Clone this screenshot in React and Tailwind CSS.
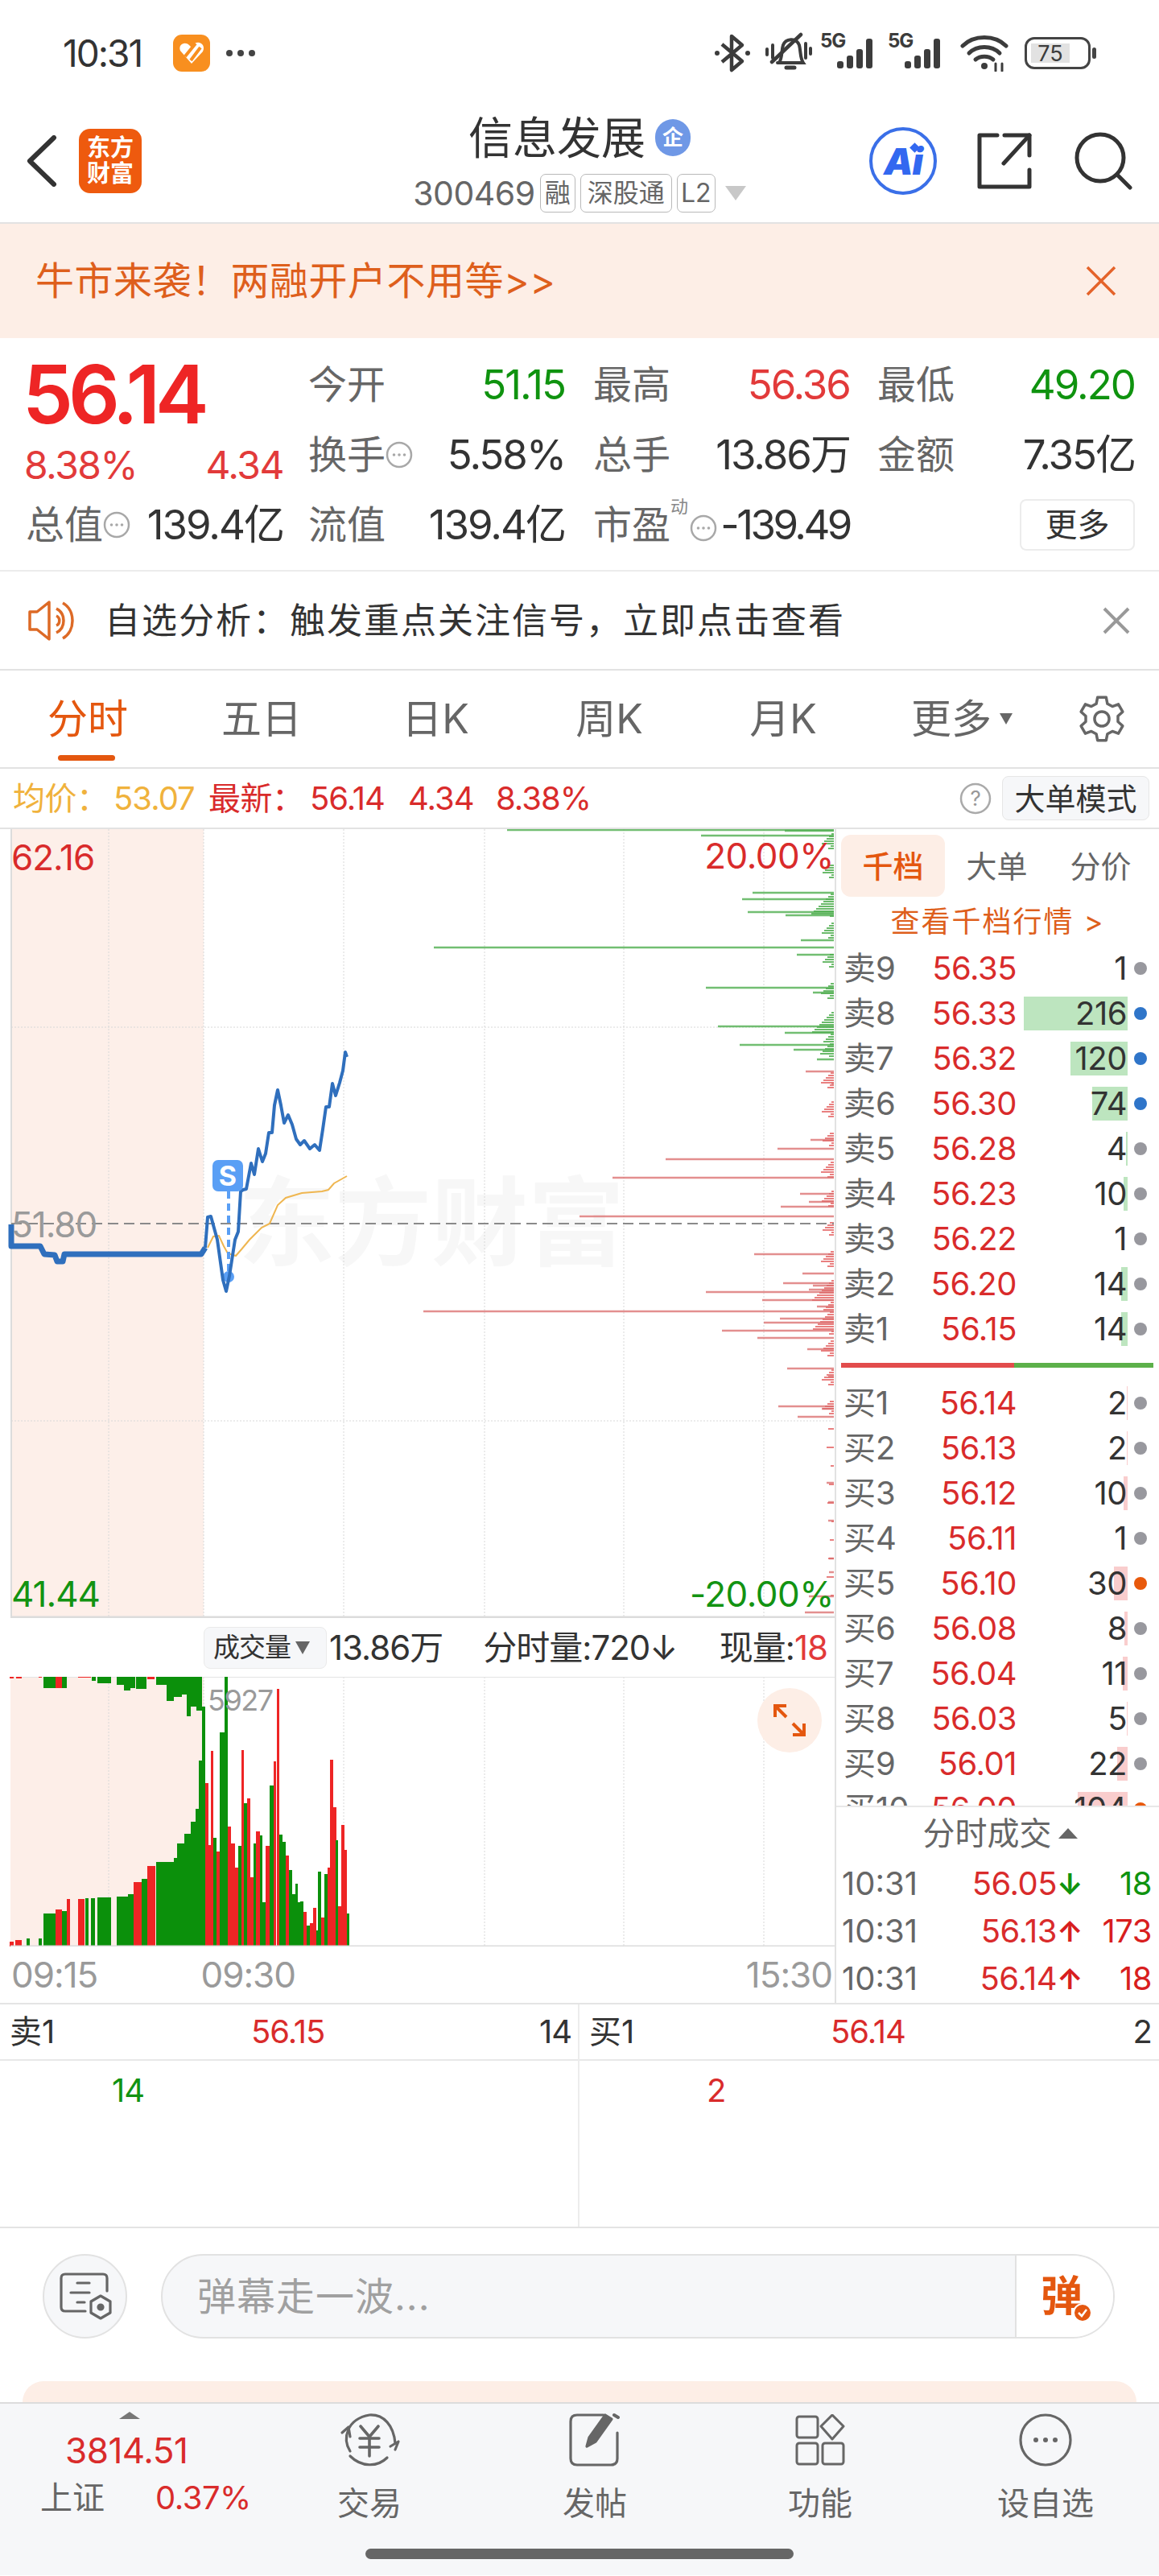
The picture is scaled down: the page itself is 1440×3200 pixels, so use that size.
import React from 'react';

const sellRows = [
  ['卖9', '56.35', '1', 0, 'gray'],
  ['卖8', '56.33', '216', 129, 'blue'],
  ['卖7', '56.32', '120', 71, 'blue'],
  ['卖6', '56.30', '74', 44, 'blue'],
  ['卖5', '56.28', '4', 2, 'gray'],
  ['卖4', '56.23', '10', 5, 'gray'],
  ['卖3', '56.22', '1', 0, 'gray'],
  ['卖2', '56.20', '14', 8, 'gray'],
  ['卖1', '56.15', '14', 8, 'gray'],
];

const buyRows = [
  ['买1', '56.14', '2', 1, 'gray'],
  ['买2', '56.13', '2', 1, 'gray'],
  ['买3', '56.12', '10', 5, 'gray'],
  ['买4', '56.11', '1', 0, 'gray'],
  ['买5', '56.10', '30', 17, 'orange'],
  ['买6', '56.08', '8', 4, 'gray'],
  ['买7', '56.04', '11', 6, 'gray'],
  ['买8', '56.03', '5', 1, 'gray'],
  ['买9', '56.01', '22', 13, 'gray'],
  ['买10', '56.00', '104', 62, 'orange'],
];

const dotColors = { gray: 'bg-[#98989e]', blue: 'bg-[#2f75c9]', orange: 'bg-[#e8590c]' };

const flatPoints = '14,1521 14,1548 50,1548 55,1558 68,1559 71,1567 78,1567 80,1558 250,1558 255,1550';
const pricePoints = '255,1550 258,1512 262,1511 270,1540 277,1590 281,1604 285,1585 292,1540 296,1530 299,1480 302,1478 306,1477 312,1445 316,1459 321,1427 326,1443 330,1433 334,1407 338,1407 341,1373 345,1354 349,1373 353,1395 358,1385 363,1397 368,1415 373,1422 378,1417 385,1427 391,1422 397,1429 401,1403 405,1375 409,1375 413,1346 417,1361 422,1345 426,1330 429,1307 431,1313';
const avgPoints = '258,1550 265,1536 272,1535 278,1548 283,1557 293,1560 300,1552 310,1540 325,1525 335,1520 345,1497 355,1488 375,1482 400,1480 408,1478 415,1470 431,1461';

// [起点x, y]，大单横线
const greenDepth = [[630, 1031], [871, 1038], [975, 1032], [935, 1109], [922, 1117], [929, 1133], [976, 1137], [995, 1168], [539, 1177], [990, 1186], [877, 1227], [1010, 1233], [892, 1275], [975, 1283], [919, 1298], [986, 1304], [1015, 1316]];
const redDepth = [[1001, 1331], [1033, 1346], [1007, 1416], [966, 1427], [827, 1440], [761, 1463], [994, 1483], [1005, 1493], [970, 1499], [720, 1511], [937, 1558], [997, 1582], [973, 1594], [1010, 1597], [1005, 1602], [877, 1605], [947, 1615], [1015, 1623], [526, 1629], [969, 1638], [949, 1643], [897, 1653], [941, 1662], [1003, 1676], [978, 1700], [1029, 1710], [967, 1747], [1021, 1750], [991, 1760], [1027, 1842], [1029, 1866], [1029, 1889], [1030, 1936], [1030, 1953], [1005, 1983], [1000, 2003]];

const depthTicks = [];
for (let y = 1030; y < 1770; y += 3) {
  const n = (y * 7919) % 37;
  const dense = (y > 1270 && y < 1310) || (y > 1600 && y < 1660) || (y > 1125 && y < 1140);
  if (n < 20 || dense) depthTicks.push([1036 - (n % (dense ? 26 : 14)) - 3, y]);
}
for (let y = 1775; y < 2005; y += 23) {
  depthTicks.push([1036 - (y % 7) - 3, y]);
}

// 成交量柱：x1, x2, 顶部y（放大图坐标，下面换算）
const volBars = [
  [18, 26, 1295, 'r'], [28, 40, 1290, 'r'], [50, 56, 1285, 'g'], [72, 78, 1285, 'g'], [82, 104, 1190, 'g'], [104, 116, 1175, 'r'], [116, 125, 1183, 'g'], [125, 131, 1138, 'r'], [146, 158, 1137, 'r'], [160, 166, 1135, 'g'], [170, 178, 1135, 'g'], [183, 208, 1132, 'g'], [218, 240, 1128, 'g'], [240, 250, 1120, 'g'], [250, 265, 1075, 'r'], [265, 276, 1063, 'g'], [276, 291, 1015, 'r'], [292, 325, 1000, 'g'], [325, 331, 985, 'g'], [331, 345, 930, 'g'], [345, 357, 895, 'g'], [357, 367, 850, 'g'], [367, 373, 800, 'g'], [373, 379, 620, 'g'], [379, 385, 420, 'g'], [385, 391, 705, 'r'], [391, 397, 935, 'r'], [395, 400, 585, 'r'], [400, 405, 910, 'g'], [405, 412, 960, 'r'], [412, 420, 515, 'g'], [421, 427, 310, 'g'], [427, 433, 868, 'r'], [433, 440, 930, 'r'], [440, 447, 1020, 'r'], [447, 452, 940, 'g'], [452, 457, 583, 'r'], [457, 463, 780, 'g'], [463, 469, 762, 'r'], [469, 475, 1055, 'r'], [475, 480, 930, 'g'], [480, 487, 885, 'r'], [487, 492, 900, 'g'], [492, 498, 1150, 'g'], [498, 505, 940, 'r'], [505, 512, 715, 'g'], [512, 517, 625, 'r'], [518, 523, 355, 'r'], [523, 529, 898, 'g'], [529, 535, 925, 'g'], [535, 541, 975, 'r'], [541, 547, 1030, 'g'], [547, 553, 1120, 'g'], [553, 558, 1080, 'g'], [558, 563, 1150, 'g'], [563, 568, 1145, 'g'], [568, 574, 1185, 'r'], [574, 580, 1235, 'g'], [580, 587, 1228, 'r'], [587, 593, 1170, 'r'], [593, 598, 1255, 'g'], [596, 602, 1035, 'g'], [602, 608, 1205, 'r'], [608, 614, 1045, 'g'], [614, 620, 1020, 'r'], [618, 624, 617, 'r'], [624, 630, 795, 'r'], [628, 633, 918, 'g'], [633, 640, 1165, 'r'], [640, 645, 860, 'r'], [645, 650, 955, 'r'], [650, 654, 1190, 'g'],
];
const volHanging = [
  [18, 26, 316, 'r'], [30, 40, 315, 'r'], [72, 78, 313, 'r'], [82, 104, 350, 'g'], [104, 116, 352, 'r'], [116, 125, 352, 'g'], [146, 170, 312, 'r'], [172, 180, 325, 'g'], [183, 208, 332, 'g'], [218, 232, 340, 'g'], [232, 245, 360, 'g'], [245, 253, 350, 'g'], [255, 275, 355, 'g'], [276, 290, 318, 'r'], [292, 312, 340, 'g'], [312, 325, 400, 'g'], [325, 340, 385, 'g'], [340, 350, 375, 'g'], [350, 358, 455, 'g'], [358, 368, 420, 'g'], [368, 378, 435, 'g'],
];
const vx = (z) => z / 1.5077;
const vy = (z) => 1980 + z / 3;
const barColor = { r: '#ee2525', g: '#0b900b' };

const InfoDots = ({ className = '' }) => (
  <svg width="34" height="34" viewBox="0 0 34 34" className={className}>
    <circle cx="17" cy="17" r="15" fill="none" stroke="#a8a8a8" strokeWidth="2.5" />
    <circle cx="10.5" cy="17" r="1.8" fill="#a8a8a8" />
    <circle cx="17" cy="17" r="1.8" fill="#a8a8a8" />
    <circle cx="23.5" cy="17" r="1.8" fill="#a8a8a8" />
  </svg>
);

const Signal = () => (
  <div className="relative w-[76px] h-[44px]">
    <span className="absolute left-0 top-[-5px] text-[24px] font-bold leading-none tracking-[-1px] text-[#3c3c3c]">5G</span>
    <svg width="76" height="44" viewBox="0 0 76 44" className="absolute inset-0">
      <rect x="21" y="32" width="8" height="9" rx="3" fill="#3c3c3c" />
      <rect x="33" y="25" width="8" height="16" rx="3" fill="#3c3c3c" />
      <rect x="45" y="17" width="8" height="24" rx="3" fill="#3c3c3c" />
      <rect x="57" y="4" width="8" height="37" rx="3" fill="#3c3c3c" />
    </svg>
  </div>
);

const StatusBar = () => (
  <div className="h-[110px] pt-[22px] pl-[78px] pr-[78px] flex items-center">
    <span className="text-[46px] leading-none tracking-[-2px] text-[#333] w-[137px]">10:31</span>
    <svg width="46" height="46" viewBox="0 0 46 46">
      <rect width="46" height="46" rx="11" fill="#f88f1f" />
      <path d="M23 36 L9 20 C6 12 15 8 20 13 L23 16 L27 11 C33 7 41 13 37 21 Z" fill="#fff" />
      <path d="M15 27 L28 11 M22 32 L34 16" stroke="#f88f1f" strokeWidth="4" />
    </svg>
    <div className="flex gap-[6px] ml-[20px]">
      <span className="w-[8px] h-[8px] rounded-full bg-[#444]" />
      <span className="w-[8px] h-[8px] rounded-full bg-[#444]" />
      <span className="w-[8px] h-[8px] rounded-full bg-[#444]" />
    </div>
    <div className="ml-auto flex items-center">
      <svg width="46" height="50" viewBox="0 0 46 50" fill="none" stroke="#3c3c3c" strokeWidth="4.5" strokeLinejoin="round">
        <path d="M10 14 L35 35 L22 46 V4 L35 15 L10 36" />
        <circle cx="4" cy="25" r="3" fill="#3c3c3c" stroke="none" />
        <circle cx="42" cy="25" r="3" fill="#3c3c3c" stroke="none" />
      </svg>
      <svg width="58" height="52" viewBox="0 0 58 52" fill="none" stroke="#3c3c3c" strokeWidth="4" strokeLinecap="round" className="ml-[18px]">
        <path d="M18 36 C21 30 20 22 22 16 C25 8 38 6 42 16 C44 24 43 32 47 38 H15" />
        <path d="M8 37 L44 3" strokeWidth="4.5" />
        <path d="M2 21 V28 M9 16 V32 M50 14 V32 M56 20 V27" />
        <path d="M26 44 H36" strokeWidth="5" />
      </svg>
      <div className="ml-[10px]"><Signal /></div>
      <div className="ml-[8px]"><Signal /></div>
      <svg width="60" height="46" viewBox="0 0 60 46" fill="none" stroke="#3c3c3c" strokeWidth="5" strokeLinecap="round" className="ml-[14px]">
        <path d="M3 14 C17 0 43 0 57 14" />
        <path d="M11 23 C21 13 39 13 49 23" />
        <path d="M19 31 C25 26 35 26 41 31" />
        <circle cx="30" cy="39" r="4" fill="#3c3c3c" stroke="none" />
        <path d="M44 36 V45 M52 45 V36" strokeWidth="3" />
      </svg>
      <div className="ml-[20px] w-[82px] h-[40px] rounded-[12px] border-[3px] border-[#444] p-[5px] relative">
        <div className="w-[48px] h-full bg-[#e2e2e2] flex items-center justify-center text-[27px] leading-none text-[#3c3c3c]">75</div>
      </div>
      <span className="w-[5px] h-[14px] rounded-full bg-[#444] ml-[2px]" />
    </div>
  </div>
);

const Tag = ({ children, className = '' }) => (
  <span className={`h-[48px] rounded-[7px] border border-[#b9b9b9] flex items-center justify-center text-[#666] text-[32px] leading-none ${className}`}>{children}</span>
);

const Header = () => (
  <div className="h-[168px] border-b-2 border-[#e2e2e2] grid grid-cols-[1fr_auto_1fr]">
    <div className="flex items-center pl-[32px] pt-[13px]">
      <svg width="40" height="64" viewBox="0 0 40 64" fill="none" stroke="#333" strokeWidth="6" strokeLinecap="round" strokeLinejoin="round">
        <path d="M35 3 L5 32 L35 61" />
      </svg>
      <div className="ml-[26px] w-[78px] h-[80px] rounded-[14px] bg-[#ee5a0e] text-white font-bold text-[29px] leading-[32px] text-center flex flex-col justify-center">
        <span>东方</span>
        <span>财富</span>
      </div>
    </div>
    <div className="flex flex-col items-center pt-[31px]">
      <div className="h-[60px] flex items-center">
        <span className="text-[55px] leading-none text-[#333]">信息发展</span>
        <span className="ml-[12px] w-[44px] h-[46px] rounded-full bg-[#6f98e6] text-white text-[26px] font-bold leading-none flex items-center justify-center">企</span>
      </div>
      <div className="mt-[15px] flex items-center gap-[6px]">
        <span className="text-[41px] leading-none text-[#666] tracking-[-0.5px]">300469</span>
        <Tag className="w-[44px]">融</Tag>
        <Tag className="w-[114px]">深股通</Tag>
        <Tag className="w-[48px]">L2</Tag>
        <svg width="26" height="18" viewBox="0 0 26 18" className="ml-[6px]"><path d="M0 0 H26 L13 18 Z" fill="#c8c8c8" /></svg>
      </div>
    </div>
    <div className="flex items-center justify-end pr-[33px] pt-[13px]">
      <div className="relative w-[84px] h-[84px] rounded-full border-[4px] border-[#3a6fe8] flex items-center justify-center text-[#3268f0] text-[46px] font-black italic leading-none tracking-[-1px]">
        Ai
        <span className="absolute right-[19px] top-[17px] w-[9px] h-[9px] bg-[#3268f0] rotate-45" />
      </div>
      <svg width="68" height="70" viewBox="0 0 68 70" fill="none" stroke="#333" strokeWidth="5" strokeLinecap="round" strokeLinejoin="round" className="ml-[50px]">
        <path d="M25 3 H3 V67 H65 V46" />
        <path d="M34 3 H65 V28" />
        <path d="M65 3 L33 38" />
      </svg>
      <svg width="72" height="72" viewBox="0 0 72 72" fill="none" stroke="#333" strokeWidth="5" strokeLinecap="round" className="ml-[53px]">
        <circle cx="32" cy="32" r="29" />
        <path d="M53 53 L69 69" />
      </svg>
    </div>
  </div>
);

const Banner = () => (
  <div className="h-[142px] bg-[#fdeee6] flex items-center pl-[44px] pr-[52px]">
    <span className="text-[48px] leading-none text-[#de5f1c] tracking-[0.5px]">牛市来袭！两融开户不用等&gt;&gt;</span>
    <svg width="40" height="40" viewBox="0 0 40 40" stroke="#e4632a" strokeWidth="3.5" className="ml-auto">
      <path d="M3 3 L37 37 M37 3 L3 37" />
    </svg>
  </div>
);

const Cell = ({ label, extra, value, color = 'text-[#333]', w = 'w-[320px]' }) => (
  <div className={`${w} flex items-center justify-between`}>
    <span className="flex items-center text-[48px] leading-none text-[#666]">{label}{extra}</span>
    <span className={`text-[51px] leading-none tracking-[-2px] ${color}`}>{value}</span>
  </div>
);

const Quote = () => (
  <div className="h-[290px] border-b-2 border-[#ececec] pt-[14px] pl-[32px] grid grid-cols-[351px_354px_353px_320px] grid-rows-[87px_87px_87px]">
    <div className="row-span-2 w-[320px]">
      <div className="h-[92px] flex items-center mt-[10px] ml-[-4px] text-[100px] font-semibold leading-none tracking-[-6px] text-[#ee2525]">56.14</div>
      <div className="mt-[18px] ml-[-2px] flex justify-between text-[48px] leading-none tracking-[-1.5px] text-[#e23a3a]">
        <span>8.38%</span>
        <span>4.34</span>
      </div>
    </div>
    <Cell label="今开" value="51.15" color="text-[#0f930f]" w="w-[319px]" />
    <Cell label="最高" value="56.36" color="text-[#e23a3a]" w="w-[319px]" />
    <Cell label="最低" value="49.20" color="text-[#0f930f]" />
    <Cell label="换手" extra={<InfoDots />} value="5.58%" w="w-[319px]" />
    <Cell label="总手" value="13.86万" w="w-[319px]" />
    <Cell label="金额" value="7.35亿" />
    <Cell label="总值" extra={<InfoDots />} value="139.4亿" />
    <Cell label="流值" value="139.4亿" w="w-[319px]" />
    <div className="w-[319px] flex items-center justify-between">
      <span className="relative flex items-center text-[48px] leading-none text-[#666]">
        市盈
        <span className="text-[22px] text-[#888] self-start mt-[-10px]">动</span>
        <InfoDots className="mt-[8px] ml-[2px]" />
      </span>
      <span className="text-[51px] leading-none tracking-[-3.5px] text-[#333]">-139.49</span>
    </div>
    <div className="flex items-center justify-end">
      <span className="w-[143px] h-[64px] rounded-[8px] border-2 border-[#ececec] flex items-center justify-center text-[40px] leading-none text-[#333]">更多</span>
    </div>
  </div>
);

const AlertRow = () => (
  <div className="h-[123px] border-b-2 border-[#e2e2e2] flex items-center pl-[34px] pr-[35px]">
    <svg width="60" height="50" viewBox="0 0 60 50" fill="none" stroke="#dd6a26" strokeWidth="3.5" strokeLinejoin="round">
      <path d="M27 2 L12 14 H3 V36 H12 L27 48 Z" />
      <path d="M36 10 C48 16 48 34 36 40" />
      <path d="M36 19 C41 21 41 29 36 31" />
      <path d="M44 3 C60 12 60 38 44 47" />
    </svg>
    <span className="ml-[36px] text-[44px] leading-none tracking-[2px] text-[#333]">自选分析：触发重点关注信号，立即点击查看</span>
    <svg width="36" height="36" viewBox="0 0 36 36" stroke="#999" strokeWidth="4" className="ml-auto">
      <path d="M3 3 L33 33 M33 3 L3 33" />
    </svg>
  </div>
);

const Tabs = () => (
  <div className="h-[122px] border-b-2 border-[#e2e2e2] flex pl-[1px] text-[50px] leading-none text-[#666]">
    <div className="relative w-[216px] flex items-center justify-center text-[#e4570f]">
      分时
      <span className="absolute left-[71px] bottom-[8px] w-[71px] h-[7px] rounded-full bg-[#e4570f]" />
    </div>
    <div className="w-[216px] flex items-center justify-center">五日</div>
    <div className="w-[216px] flex items-center justify-center">日K</div>
    <div className="w-[216px] flex items-center justify-center">周K</div>
    <div className="w-[216px] flex items-center justify-center">月K</div>
    <div className="w-[216px] pl-[12px] flex items-center justify-center">
      更多
      <svg width="16" height="14" viewBox="0 0 16 14" className="ml-[10px]"><path d="M0 0 H16 L8 14 Z" fill="#666" /></svg>
    </div>
    <div className="w-[143px] flex items-center justify-center">
      <svg width="64" height="64" viewBox="0 0 24 24" fill="none" stroke="#666" strokeWidth="1.3" strokeLinejoin="round">
        <path d="M10 2 h4 l.6 3 2.3 1.2 2.8-1 2 3.5-2.2 2 v2.6 l2.2 2-2 3.5-2.8-1-2.3 1.2-.6 3 h-4 l-.6-3-2.3-1.2-2.8 1-2-3.5 2.2-2 v-2.6 l-2.2-2 2-3.5 2.8 1 2.3-1.2 Z" />
        <circle cx="12" cy="12" r="3.4" />
      </svg>
    </div>
  </div>
);

const InfoRow = () => (
  <div className="h-[75px] border-b-2 border-[#e2e2e2] flex items-center pl-[16px] pr-[12px] text-[40px] leading-none tracking-[-0.5px]">
    <span className="w-[125px] text-[#f0b23c]">均价：</span>
    <span className="w-[118px] text-[#f0b23c] tracking-[-1px]">53.07</span>
    <span className="w-[126px] text-[#d92b2b]">最新：</span>
    <span className="w-[122px] text-[#d92b2b] tracking-[-1px]">56.14</span>
    <span className="w-[109px] text-[#d92b2b] tracking-[-1px]">4.34</span>
    <span className="text-[#d92b2b] tracking-[-1px]">8.38%</span>
    <svg width="40" height="40" viewBox="0 0 40 40" className="ml-auto">
      <circle cx="20" cy="20" r="18" fill="none" stroke="#aaa" strokeWidth="2.5" />
      <text x="20" y="29" textAnchor="middle" fontSize="26" fill="#999">?</text>
    </svg>
    <span className="ml-[13px] w-[183px] h-[55px] rounded-[8px] border border-[#e6e6e6] bg-[#f6f7f9] flex items-center justify-center text-[38px] tracking-normal text-[#333]">大单模式</span>
  </div>
);

const PriceChart = () => (
  <div className="relative h-[980px]">
    <div className="absolute left-[296px] top-[430px] text-[120px] font-bold leading-none text-[#f7f7f7] whitespace-nowrap">东方财富</div>
    <svg width="1037" height="980" viewBox="0 1030 1037 980" className="absolute inset-0">
      <rect x="14" y="1030" width="239" height="980" fill="#fdeee8" fillOpacity="0.95" />
      <path d="M14 1030 V2010" stroke="#dcdcdc" strokeWidth="2" />
      {[135, 253, 427, 602, 775, 949].map((x) => (
        <path key={x} d={`M${x} 1030 V2010`} stroke="#d8d8d8" strokeWidth="1" strokeDasharray="2 2" />
      ))}
      {[1276, 1765].map((y) => (
        <path key={y} d={`M14 ${y} H1036`} stroke="#d8d8d8" strokeWidth="1" strokeDasharray="2 2" />
      ))}
      <path d="M14 2009 H1037" stroke="#dcdcdc" strokeWidth="3" />
      {depthTicks.map(([x, y]) => (
        <path key={y} d={`M${x} ${y} H1036`} stroke={y < 1325 ? '#3aa33a' : '#e25555'} strokeWidth="2" strokeOpacity="0.75" />
      ))}
      {greenDepth.map(([x, y]) => (
        <path key={y} d={`M${x} ${y} H1036`} stroke="#4fae4f" strokeWidth="2.5" strokeOpacity="0.8" />
      ))}
      {redDepth.map(([x, y]) => (
        <path key={y} d={`M${x} ${y} H1036`} stroke="#d96a6a" strokeWidth="2.5" strokeOpacity="0.75" />
      ))}
      <path d="M14 1520 H1036" stroke="#8a8a8a" strokeWidth="2" strokeDasharray="13 7" />
      <polyline points={avgPoints} fill="none" stroke="#efb650" strokeWidth="2" />
      <path d="M284 1480 V1590" stroke="#5a9ff5" strokeWidth="4" strokeDasharray="9 6" />
      <circle cx="284" cy="1586" r="7" fill="#5a9ff5" />
      <polyline points={flatPoints} fill="none" stroke="#2f6fbd" strokeWidth="7" strokeLinejoin="round" />
      <polyline points={pricePoints} fill="none" stroke="#2f6fbd" strokeWidth="4" strokeLinejoin="round" />
      <rect x="264" y="1441" width="38" height="39" rx="7" fill="#5a9ff5" />
      <text x="283" y="1473" textAnchor="middle" fontSize="34" fontWeight="700" fill="#fff" fontFamily="Inter">S</text>
    </svg>
    <span className="absolute left-[14px] top-[13px] text-[44px] leading-none tracking-[-1px] text-[#d92b2b]">62.16</span>
    <span className="absolute right-[1px] top-[11px] text-[44px] leading-none tracking-[-0.5px] text-[#d92b2b]">20.00%</span>
    <span className="absolute left-[14px] top-[469px] text-[44px] leading-none tracking-[-1px] text-[#9a9a9a]">51.80</span>
    <span className="absolute left-[14px] top-[928px] text-[44px] leading-none tracking-[-1px] text-[#129312]">41.44</span>
    <span className="absolute right-[1px] top-[928px] text-[44px] leading-none tracking-[-0.5px] text-[#129312]">-20.00%</span>
  </div>
);

const VolumeHeader = () => (
  <div className="h-[73px] relative flex items-center pl-[253px] pr-[9px] text-[42px] leading-none tracking-[-1px] text-[#333]">
    <span className="w-[153px] h-[52px] rounded-[8px] bg-[#f6f7f9] border border-[#eaeaea] flex items-center pl-[11px] text-[33px]">
      成交量
      <svg width="18" height="16" viewBox="0 0 18 16" className="ml-[6px]"><path d="M0 0 H18 L9 16 Z" fill="#666" /></svg>
    </span>
    <span className="ml-[3px]">13.86万</span>
    <span className="ml-[50px]">分时量:720↓</span>
    <span className="ml-auto">现量:<span className="text-[#e23a3a]">18</span></span>
  </div>
);

const VolumeChart = () => (
  <div className="relative h-[335px]">
    <svg width="1037" height="335" viewBox="0 2083 1037 335" className="absolute inset-0">
      <rect x="13" y="2083" width="240" height="335" fill="#fdeee8" />
      {[135, 253, 427, 602, 775, 949].map((x) => (
        <path key={x} d={`M${x} 2083 V2418`} stroke="#d8d8d8" strokeWidth="1" strokeDasharray="2 2" />
      ))}
      <path d="M13 2083 H1037" stroke="#e4e4e4" strokeWidth="2" />
      {volHanging.map(([a, b, t, c]) => (
        <rect key={`h${a}`} x={vx(a)} y="2083" width={vx(b - a)} height={vy(t) - 2083} fill={barColor[c]} shapeRendering="crispEdges" />
      ))}
      {volBars.map(([a, b, t, c]) => (
        <rect key={`b${a}`} x={vx(a)} y={vy(t)} width={vx(b - a)} height={2418 - vy(t)} fill={barColor[c]} shapeRendering="crispEdges" />
      ))}
      <path d="M13 2418 H1037" stroke="#dcdcdc" strokeWidth="3" />
    </svg>
    <span className="absolute left-[258px] top-[11px] text-[36px] leading-none tracking-[-1.5px] text-[#9a9a9a]">5927</span>
    <div className="absolute left-[941px] top-[14px] w-[80px] h-[80px] rounded-full bg-[#fdeee6] flex items-center justify-center">
      <svg width="42" height="42" viewBox="0 0 42 42" fill="none" stroke="#e4570f" strokeWidth="4">
        <path d="M3 17 V3 H17 M3 3 L17 17" />
        <path d="M39 25 V39 H25 M39 39 L25 25" />
      </svg>
    </div>
  </div>
);

const TimeAxis = () => (
  <div className="h-[70px] flex items-center pl-[14px] pr-[3px] text-[44px] leading-none tracking-[-1px] text-[#9a9a9a]">
    <span>09:15</span>
    <span className="ml-[128px]">09:30</span>
    <span className="ml-auto">15:30</span>
  </div>
);

const OrderRow = ({ row, barColorClass }) => {
  const [label, price, vol, bar, dot] = row;
  return (
    <div className="h-[56px] flex items-center pl-[9px] text-[40px] leading-none">
      <span className="w-[100px] text-[#666] whitespace-nowrap">{label}</span>
      <span className="w-[115px] text-right text-[#d92b2b] tracking-[-0.5px]">{price}</span>
      <div className="relative w-[137px] h-[42px] flex items-center justify-end">
        <span style={{ width: bar }} className={`absolute right-[-1px] top-0 h-full ${barColorClass}`} />
        <span className="relative text-[#333] tracking-[-0.5px]">{vol}</span>
      </div>
      <span className={`ml-[9px] w-[16px] h-[16px] rounded-full ${dotColors[dot]}`} />
    </div>
  );
};

const Trade = ({ price, arrow, vol, up }) => (
  <div className="h-[59px] flex items-center pl-[7px] pr-[9px] text-[40px] leading-none">
    <span className="w-[102px] text-[#666]">10:31</span>
    <span className="w-[165px] text-right text-[#d92b2b] tracking-[-0.5px]">{price}</span>
    <span className={`w-[24px] text-right font-bold text-[36px] ${up ? 'text-[#d81e1e]' : 'text-[#0f930f]'}`}>{arrow}</span>
    <span className={`ml-auto tracking-[-0.5px] ${vol === '18' && !up ? 'text-[#0f930f]' : 'text-[#d81e1e]'}`}>{vol}</span>
  </div>
);

const OrderBook = () => (
  <div className="w-[403px] h-[1458px] border-l-2 border-[#e2e2e2] overflow-hidden">
    <div className="flex pt-[7px] pl-[6px] h-[84px] text-[38px] leading-none text-[#666]">
      <span className="w-[129px] h-[77px] rounded-[12px] bg-[#fdeee6] text-[#e4570f] font-medium flex items-center justify-center">千档</span>
      <span className="w-[129px] h-[77px] flex items-center justify-center">大单</span>
      <span className="w-[129px] h-[77px] flex items-center justify-center">分价</span>
    </div>
    <div className="h-[61px] flex items-center justify-center text-[#de5f1c] text-[36px] leading-none tracking-[2px]">查看千档行情 &gt;</div>
    {sellRows.map((r) => <OrderRow key={r[0]} row={r} barColorClass="bg-[#bde5bf]" />)}
    <div className="mt-[14px] ml-[6px] w-[388px] h-[6px] flex">
      <span className="w-[215px] bg-[#e24c4c]" />
      <span className="flex-1 bg-[#5cb04a]" />
    </div>
    <div className="mt-[16px] h-[528px] overflow-hidden">
      {buyRows.map((r) => <OrderRow key={r[0]} row={r} barColorClass="bg-[#f9cdcd]" />)}
    </div>
    <div className="h-[67px] border-t-2 border-[#e8e8e8] flex items-center justify-center pl-[6px] text-[40px] leading-none text-[#666]">
      分时成交
      <svg width="24" height="13" viewBox="0 0 24 13" className="ml-[8px]"><path d="M0 13 H24 L12 0 Z" fill="#666" /></svg>
    </div>
    <div>
      <Trade price="56.05" arrow="↓" vol="18" />
      <Trade price="56.13" arrow="↑" vol="173" up />
      <Trade price="56.14" arrow="↑" vol="18" up />
    </div>
  </div>
);

const BestQuotes = () => (
  <div className="h-[280px] border-t-2 border-b-2 border-[#e4e4e4] grid grid-cols-[720px_720px] text-[40px] leading-none">
    <div className="border-r-2 border-[#ececec]">
      <div className="h-[70px] border-b-2 border-[#e8e8e8] flex items-center pl-[12px] pr-[8px] relative">
        <span className="text-[#333]">卖1</span>
        <span className="absolute left-[312px] text-[#d92b2b] tracking-[-1px]">56.15</span>
        <span className="ml-auto text-[#333] tracking-[-1px]">14</span>
      </div>
      <div className="pt-[17px] pl-[139px] text-[#129312] tracking-[-1px]">14</div>
    </div>
    <div>
      <div className="h-[70px] border-b-2 border-[#e8e8e8] flex items-center pl-[12px] pr-[8px] relative">
        <span className="text-[#333]">买1</span>
        <span className="absolute left-[312px] text-[#d92b2b] tracking-[-1px]">56.14</span>
        <span className="ml-auto text-[#333]">2</span>
      </div>
      <div className="pt-[17px] pl-[158px] text-[#d92b2b]">2</div>
    </div>
  </div>
);

const Danmu = () => (
  <div className="h-[216px] flex flex-col">
    <div className="pt-[32px] pl-[53px] flex">
      <div className="w-[105px] h-[105px] rounded-full bg-[#f6f7f9] border-2 border-[#e2e2e2] flex items-center justify-center">
        <svg width="66" height="62" viewBox="0 0 66 62" fill="none" stroke="#666" strokeWidth="3.2" strokeLinecap="round" strokeLinejoin="round">
          <path d="M60 24 V8 Q60 3 55 3 H8 Q3 3 3 8 V44 Q3 49 8 49 H33" />
          <path d="M23 14 H38 M15 26 H38 M23 38 H32" />
          <path d="M52 30 L64 37 V51 L52 58 L40 51 V37 Z" />
          <circle cx="52" cy="44" r="3" fill="#666" />
        </svg>
      </div>
      <div className="ml-[42px] w-[1185px] h-[105px] rounded-full bg-[#f6f7f9] border-2 border-[#e2e2e2] flex overflow-hidden">
        <div className="flex-1 flex items-center pl-[43px] text-[48px] leading-none tracking-[1px] text-[#a0a0a0]">弹幕走一波...</div>
        <div className="w-[122px] bg-white border-l-2 border-[#e2e2e2] flex items-center justify-center relative">
          <span className="text-[52px] font-bold leading-none text-[#e4570f] mr-[8px]">弹</span>
          <span className="absolute right-[26px] bottom-[18px] w-[24px] h-[24px] rounded-full bg-[#e4570f] border-2 border-white flex items-center justify-center">
            <svg width="14" height="14" viewBox="0 0 14 14" fill="none" stroke="#fff" strokeWidth="2.5"><path d="M2 7 L6 11 L12 3" /></svg>
          </span>
        </div>
      </div>
    </div>
    <div className="mt-auto mx-[28px] h-[26px] rounded-t-[40px] bg-[#fdeee6]" />
  </div>
);

const NavItem = ({ icon, label }) => (
  <div className="w-[280px] flex flex-col items-center">
    <div className="h-[70px] flex items-center justify-center">{icon}</div>
    <span className="mt-[24px] text-[40px] leading-none text-[#666]">{label}</span>
  </div>
);

const BottomNav = () => (
  <div className="h-[215px] bg-[#f6f7f9] border-t-2 border-[#dcdcdc] relative">
    <div className="flex pt-[10px]">
      <div className="w-[319px] pl-[50px] flex flex-col">
        <svg width="26" height="9" viewBox="0 0 26 9" className="ml-[98px]"><path d="M0 9 H26 L13 0 Z" fill="#777" /></svg>
        <span className="ml-[31px] mt-[17px] text-[44px] leading-none tracking-[-0.5px] text-[#d92b2b]">3814.51</span>
        <div className="mt-[17px] flex items-center text-[40px] leading-none">
          <span className="text-[#666]">上证</span>
          <span className="ml-[63px] text-[#d92b2b] tracking-[-0.5px]">0.37%</span>
        </div>
      </div>
      <NavItem
        label="交易"
        icon={
          <svg width="76" height="68" viewBox="0 0 76 68" fill="none" stroke="#666" strokeWidth="3.2" strokeLinecap="round" strokeLinejoin="round">
            <path d="M14 48 C4 32 10 8 38 3 C56 2 68 16 70 38" />
            <path d="M60 56 C48 68 28 68 14 54" />
            <path d="M4 25 L12 18 L14 30 M64 42 L74 36 L70 46" />
            <path d="M27 17 L38 30 L49 17 M26 32 H50 M26 43 H50 M38 30 V54" strokeWidth="3.6" />
          </svg>
        }
      />
      <NavItem
        label="发帖"
        icon={
          <svg width="66" height="68" viewBox="0 0 66 68" fill="none" stroke="#666" strokeWidth="3.2" strokeLinecap="round" strokeLinejoin="round">
            <path d="M44 3 H11 Q3 3 3 11 V57 Q3 65 11 65 H53 Q61 65 61 57 V25" />
            <path d="M23 42 L26 31 L46 3 L54 8 L34 36 Z" fill="#666" />
            <path d="M57 3 L62 6" strokeWidth="4" />
          </svg>
        }
      />
      <NavItem
        label="功能"
        icon={
          <svg width="62" height="64" viewBox="0 0 62 64" fill="none" stroke="#666" strokeWidth="3" strokeLinejoin="round">
            <rect x="2" y="3" width="26" height="26" rx="3" />
            <path d="M46 1 L60 15 L46 31 L32 15 Z" />
            <rect x="2" y="36" width="26" height="26" rx="3" />
            <rect x="34" y="36" width="26" height="26" rx="3" />
          </svg>
        }
      />
      <NavItem
        label="设自选"
        icon={
          <svg width="68" height="68" viewBox="0 0 68 68">
            <circle cx="34" cy="34" r="31" fill="none" stroke="#666" strokeWidth="3.2" />
            <circle cx="22" cy="34" r="3" fill="#666" />
            <circle cx="34" cy="34" r="3" fill="#666" />
            <circle cx="46" cy="34" r="3" fill="#666" />
          </svg>
        }
      />
    </div>
    <div className="absolute left-[454px] top-[180px] w-[532px] h-[13px] rounded-full bg-[#666]" />
  </div>
);

const App = () => {
  return (
    <div className="w-[1440px] h-[3200px] overflow-hidden bg-white font-[Inter,'Noto_Sans_CJK_SC',sans-serif]">
      <StatusBar />
      <Header />
      <Banner />
      <Quote />
      <AlertRow />
      <Tabs />
      <InfoRow />
      <div className="flex">
        <div className="w-[1037px]">
          <PriceChart />
          <VolumeHeader />
          <VolumeChart />
          <TimeAxis />
        </div>
        <OrderBook />
      </div>
      <BestQuotes />
      <Danmu />
      <BottomNav />
    </div>
  );
};

export default App;
